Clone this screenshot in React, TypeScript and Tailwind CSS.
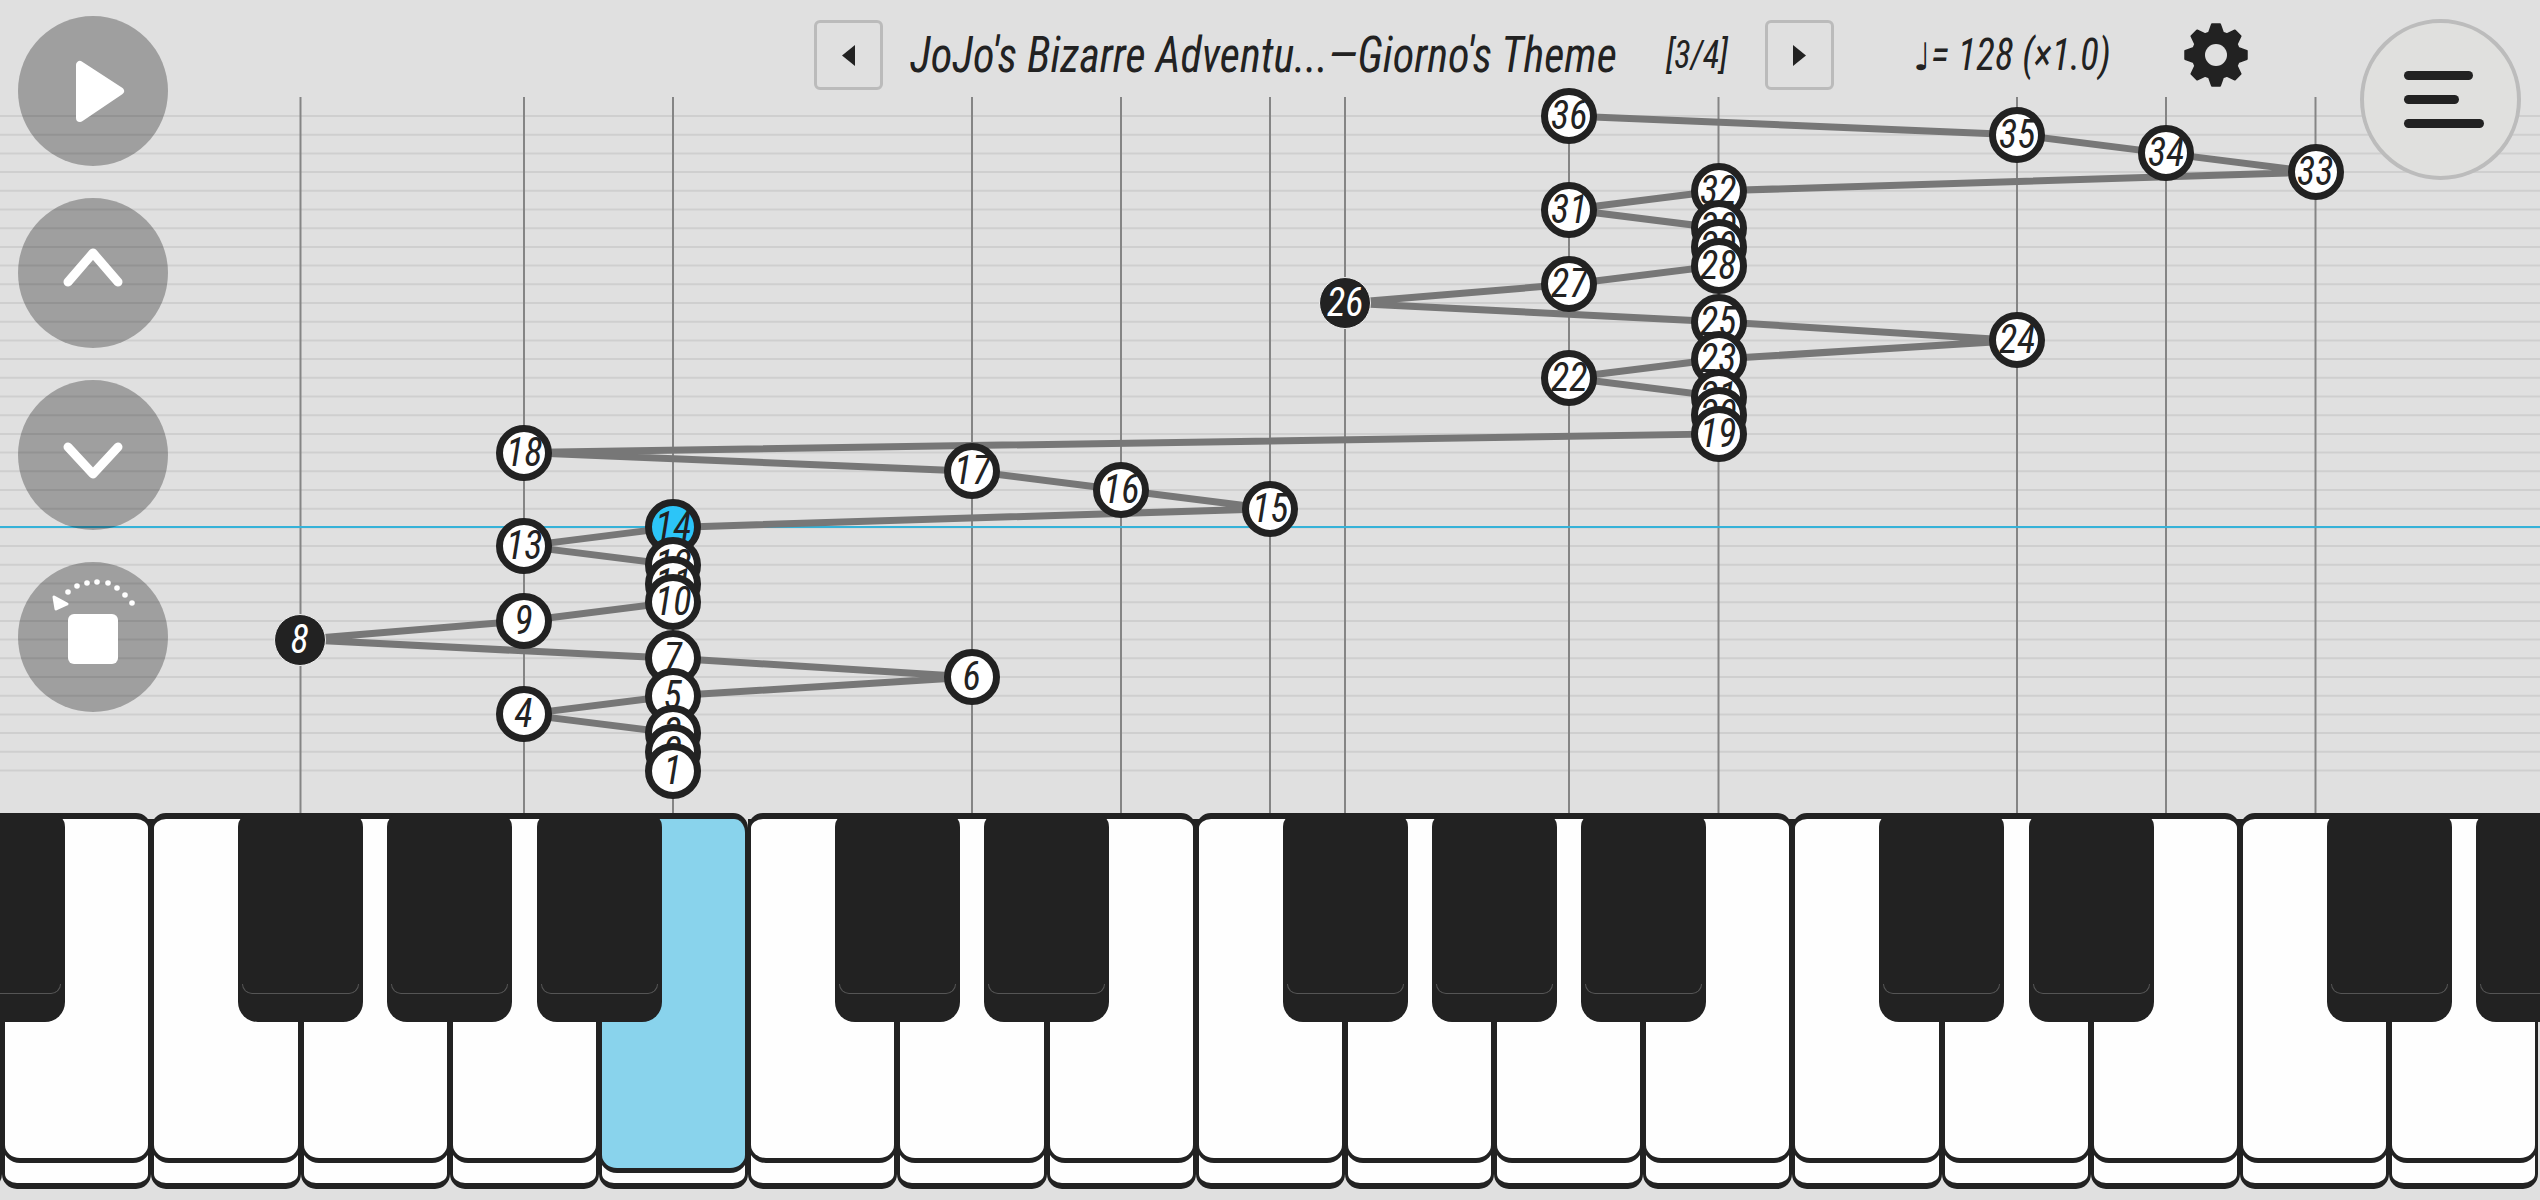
import React from 'react'

const ROW = 18.7
const nodeX: number[] = [
  673, 673, 673, 524, 673, 972, 673, 300, 524, 673, 673, 673,
  524, 673, 1270, 1121, 972, 524, 1718.5, 1718.5, 1718.5, 1569, 1718.5, 2017,
  1718.5, 1345, 1569, 1718.5, 1718.5, 1718.5, 1569, 1718.5, 2315.5, 2166, 2017, 1569,
]
const stems = [300.5, 524, 673, 972, 1121, 1270, 1345, 1569, 1718.5, 2017, 2166, 2315.5]
const blackAt = [0, 2, 3, 4, 6, 7, 9, 10, 11, 13, 14, 16, 17]
const KEY_W = 149.2
const FIRST = 2.3

const nodes = nodeX.map((x, i) => ({ n: i + 1, x, y: 770.5 - ROW * i }))
const condensed = 'font-["Roboto",sans-serif] italic [font-stretch:75%]'

function gearPath(cx: number, cy: number) {
  const pts: string[] = []
  for (let t = 0; t < 8; t++) {
    const a = (t * Math.PI) / 4 - Math.PI / 2
    const at = (r: number, d: number) =>
      `${(cx + r * Math.cos(a + d)).toFixed(2)} ${(cy + r * Math.sin(a + d)).toFixed(2)}`
    pts.push(at(23.5, -0.3), at(31, -0.13), at(31, 0.13), at(23.5, 0.3))
  }
  return `M${pts.join('L')}Z`
}

function RoundButton({ children }: { children: React.ReactNode }) {
  return (
    <button className="h-[150px] w-[150px] rounded-full bg-black/[0.29]">
      <svg viewBox="0 0 150 150" className="h-full w-full">
        {children}
      </svg>
    </button>
  )
}

function PagerButton({ dir }: { dir: 'left' | 'right' }) {
  return (
    <button className="flex h-[70px] w-[69px] shrink-0 items-center justify-center rounded-[6px] border-[3px] border-[#bbbbbb]">
      <svg viewBox="0 0 13 21" className="h-[21px] w-[13px] fill-[#222222]">
        <path d={dir === 'left' ? 'M13 0V21L0 10.5Z' : 'M0 0V21L13 10.5Z'} />
      </svg>
    </button>
  )
}

function WhiteKey({ active }: { active?: boolean }) {
  return (
    <div className="h-[376px] w-[149.2px] shrink-0 rounded-[15px] border-x-[3px] border-y-[6px] border-[#222222] bg-[#fefefe]">
      <div
        className={
          active
            ? '-mx-[3px] h-[354px] rounded-t-[14px] rounded-b-[18px] border-x-[3px] border-b-[5px] border-[#222222] bg-[#89d3ec]'
            : '-mx-[3px] h-[344px] rounded-b-[18px] border-x-[3px] border-b-[5px] border-[#222222]'
        }
      />
    </div>
  )
}

function Staff() {
  return (
    <svg viewBox="0 0 2540 813" className="absolute inset-0 h-[813px] w-[2540px]">
      {nodes.map(({ n, y }) => (
        <line key={n} x1="0" x2="2540" y1={y} y2={y} stroke="#cfcfcf" strokeWidth="2" />
      ))}
      {stems.map(x => (
        <line key={x} x1={x} x2={x} y1="97" y2="813" stroke="#858585" strokeWidth="2" />
      ))}
      <line x1="0" x2="2540" y1="527" y2="527" stroke="#35b2d8" strokeWidth="2" />
      <polyline
        points={nodes.map(p => `${p.x},${p.y}`).join(' ')}
        fill="none"
        stroke="#777777"
        strokeWidth="7"
      />
    </svg>
  )
}

function Node({ n, x, y }: { n: number; x: number; y: number }) {
  const dark = n === 8 || n === 26
  const cls = dark
    ? 'h-[52px] w-[52px] border border-[#eeeeee] bg-[#222222] text-white'
    : n === 14
      ? 'h-[56px] w-[56px] border-[7px] border-[#222222] bg-[#2cc5f8] text-[#222222]'
      : 'h-[56px] w-[56px] border-[7px] border-[#222222] bg-white text-[#222222]'
  return (
    <div
      className={`absolute flex -translate-x-1/2 -translate-y-1/2 items-center justify-center rounded-full text-[40px] leading-none ${condensed} ${cls}`}
      style={{ left: x, top: y }}
    >
      <span className="scale-x-95">{n}</span>
    </div>
  )
}

export default function App() {
  return (
    <div className="relative flex h-[1200px] w-[2540px] flex-col overflow-hidden bg-[#e0e0e0]">
      <div className="relative h-[813px] shrink-0">
        <Staff />
        {[...nodes].reverse().map(p => (
          <Node key={p.n} {...p} />
        ))}

        <div className="absolute left-[18px] top-[16px] flex flex-col gap-[32px]">
          <RoundButton>
            <path d="M62 49V102L102 75Z" fill="white" stroke="white" strokeWidth="8" strokeLinejoin="round" />
          </RoundButton>
          <RoundButton>
            <path d="M50 84L75 55L100 84" fill="none" stroke="white" strokeWidth="9" strokeLinecap="round" strokeLinejoin="round" />
          </RoundButton>
          <RoundButton>
            <path d="M50 67L75 94L100 67" fill="none" stroke="white" strokeWidth="9" strokeLinecap="round" strokeLinejoin="round" />
          </RoundButton>
          <RoundButton>
            <rect x="50" y="52" width="50" height="50" rx="6" fill="white" />
            <path d="M36 35L49 42L38 47Z" fill="white" stroke="white" strokeWidth="3" strokeLinejoin="round" />
            {[[50, 30], [59, 24], [69, 21], [79, 20], [90, 21], [99, 26], [107, 33], [114, 41]].map(([cx, cy]) => (
              <circle key={cx} cx={cx} cy={cy} r="2.8" fill="white" />
            ))}
          </RoundButton>
        </div>

        <div className="absolute left-[814px] top-[20px] flex h-[70px] items-center text-[#222222]">
          <PagerButton dir="left" />
          <h1 className={`ml-[27px] w-[707px] origin-left scale-x-[0.885] whitespace-nowrap text-[50px] leading-none ${condensed}`}>
            JoJo's Bizarre Adventu...—Giorno's Theme
          </h1>
          <span className={`ml-[49px] w-[61px] origin-left scale-x-90 whitespace-nowrap text-[38px] leading-none ${condensed}`}>[3/4]</span>
          <div className="ml-[38px]">
            <PagerButton dir="right" />
          </div>
          <span className={`ml-[79px] flex w-[194px] items-baseline whitespace-nowrap text-[44px] leading-none ${condensed}`}>
            <span className='font-["DejaVu_Sans",sans-serif] text-[38px] not-italic [font-stretch:100%]'>♩</span>
            <span className="origin-left scale-x-[0.88]">= 128 (×1.0)</span>
          </span>
          <svg viewBox="0 0 66 66" className="ml-[76px] h-[66px] w-[66px] fill-[#222222] stroke-[#222222] stroke-2 [stroke-linejoin:round]">
            <path d={gearPath(33, 33)} />
            <circle cx="33" cy="33" r="11" className="fill-[#e0e0e0] stroke-none" />
          </svg>
        </div>

        <button className="absolute left-[2360px] top-[19px] flex h-[161px] w-[161px] flex-col items-start justify-center gap-[15px] rounded-full border-[4px] border-[#bcbcbc] bg-[#e0e0de] pl-[40px]">
          <span className="h-[9px] w-[69px] rounded-full bg-[#222222]" />
          <span className="h-[9px] w-[55px] rounded-full bg-[#222222]" />
          <span className="h-[9px] w-[80px] rounded-full bg-[#222222]" />
        </button>
      </div>

      <div className="relative flex-1">
        <div className="-ml-[147px] flex">
          {Array.from({ length: 18 }, (_, i) => (
            <WhiteKey key={i} active={i === 5} />
          ))}
        </div>
        {blackAt.map(i => (
          <div
            key={i}
            className="absolute top-0 h-[209px] w-[125px] rounded-t-[14px] rounded-b-[20px] bg-[#222222]"
            style={{ left: FIRST + i * KEY_W - 62.5 }}
          >
            <div className="absolute inset-x-[4px] top-[171px] h-[10px] rounded-b-[10px] border-x border-b border-[#555555]" />
          </div>
        ))}
      </div>
    </div>
  )
}
